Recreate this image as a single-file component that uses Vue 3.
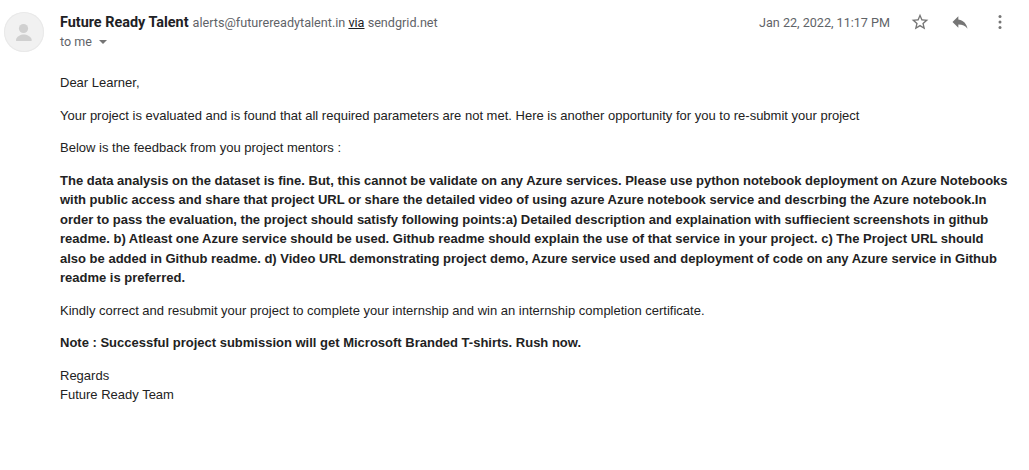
<script setup>
const paragraphs = [
  { text: 'Dear Learner,' },
  { text: 'Your project is evaluated and is found that all required parameters are not met. Here is another opportunity for you to re-submit your project' },
  { text: 'Below is the feedback from you project mentors :' },
  {
    bold: true,
    text: 'The data analysis on the dataset is fine. But, this cannot be validate on any Azure services. Please use python notebook deployment on Azure Notebooks with public access and share that project URL or share the detailed video of using azure Azure notebook service and descrbing the Azure notebook.In order to pass the evaluation, the project should satisfy following points:a) Detailed description and explaination with suffiecient screenshots in github readme. b) Atleast one Azure service should be used. Github readme should explain the use of that service in your project. c) The Project URL should also be added in Github readme. d) Video URL demonstrating project demo, Azure service used and deployment of code on any Azure service in Github readme is preferred.'
  },
  { text: 'Kindly correct and resubmit your project to complete your internship and win an internship completion certificate.' },
  { bold: true, text: 'Note : Successful project submission will get Microsoft Branded T-shirts. Rush now.' }
]
</script>

<template>
  <div class="mail">
    <div class="avatar">
      <svg width="40" height="40" viewBox="0 0 40 40">
        <circle cx="19.5" cy="16.5" r="4.6" fill="#d0d0d0" />
        <path d="M12 28c0-3.6 5-5.6 7.7-5.6s8 2 8 5.6v.6c0 .3-.2.4-.4.4H12.4c-.2 0-.4-.1-.4-.4z" fill="#d0d0d0" />
      </svg>
    </div>
    <div class="content">
      <div class="head">
        <div class="sender">
          <div class="from">
            <span class="name">Future Ready Talent</span>
            <span class="addr">alerts@futurereadytalent.in <u>via</u> sendgrid.net</span>
          </div>
          <div class="to">to me <i class="caret"></i></div>
        </div>
        <div class="meta">
          <span class="date">Jan 22, 2022, 11:17 PM</span>
          <svg class="icon" width="20" height="20" viewBox="0 0 24 24">
            <path d="M22 9.24l-7.19-.62L12 2 9.19 8.63 2 9.24l5.46 4.73L5.82 21 12 17.27 18.18 21l-1.63-7.03L22 9.24zM12 15.4l-3.76 2.27 1-4.28-3.32-2.88 4.38-.38L12 6.1l1.71 4.04 4.38.38-3.32 2.88 1 4.28L12 15.4z" fill="#757575" />
          </svg>
          <svg class="icon" width="20" height="20" viewBox="0 0 24 24">
            <path d="M10 9V5l-7 7 7 7v-4.1c5 0 8.5 1.6 11 5.1-1-5-4-10-11-11z" fill="#757575" />
          </svg>
          <svg class="icon" width="20" height="20" viewBox="0 0 24 24">
            <circle cx="12" cy="5.5" r="1.8" fill="#757575" />
            <circle cx="12" cy="12" r="1.8" fill="#757575" />
            <circle cx="12" cy="18.5" r="1.8" fill="#757575" />
          </svg>
        </div>
      </div>
      <div class="body">
        <p v-for="(p, i) in paragraphs" :key="i" :class="{ bold: p.bold }">{{ p.text }}</p>
        <p>Regards<br />Future Ready Team</p>
      </div>
    </div>
  </div>
</template>

<style>
body {
  background: #fff;
}
</style>

<style scoped>
.mail {
  display: flex;
  gap: 16px;
  padding: 12px 19px 0 4px;
  height: 458px;
  overflow: hidden;
}

.avatar {
  flex: none;
  width: 40px;
  height: 40px;
  border-radius: 50%;
  background: #f1f1f1;
  box-shadow: inset 0 0 0 1px #e9e9e9;
}

.content {
  flex: 1;
  min-width: 0;
}

.head {
  display: flex;
  justify-content: space-between;
  font-family: Roboto, sans-serif;
}

.from {
  line-height: 19px;
}

.name {
  font-size: 14.4px;
  font-weight: 700;
  color: #202124;
}

.addr {
  font-size: 12.65px;
  color: #5f6368;
  margin-left: 4px;
}

.addr u {
  color: #202124;
}

.to {
  font-size: 12.5px;
  line-height: 20px;
  color: #5f6368;
  display: flex;
  align-items: center;
}

.caret {
  width: 0;
  height: 0;
  margin: 0 0 0 7px;
  border-left: 4px solid transparent;
  border-right: 4px solid transparent;
  border-top: 4px solid #757575;
}

.meta {
  display: flex;
  align-items: center;
  height: 20px;
  gap: 20px;
  color: #5f6368;
  font-size: 12.6px;
}

.body {
  margin-top: 21px;
  font-family: "Liberation Sans", Arial, sans-serif;
  font-size: 13px;
  line-height: 19.5px;
  color: #222;
}

.body p {
  margin: 0 0 13px;
}

.bold {
  font-weight: 700;
}
</style>
